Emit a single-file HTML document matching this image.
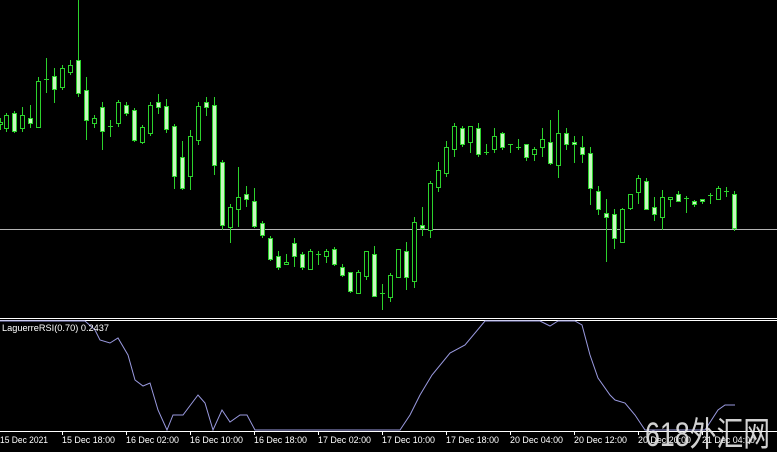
<!DOCTYPE html>
<html><head><meta charset="utf-8"><style>
html,body{margin:0;padding:0;background:#000;width:777px;height:452px;overflow:hidden}
svg{display:block}
.f{fill:#c8f8c0;stroke:#2cd22c}
.h{fill:#000;stroke:#2cd22c}
.w{stroke:#2cd22c}
text{font-family:"Liberation Sans",sans-serif;fill:#fff}
</style></head><body>
<svg width="777" height="452" viewBox="0 0 777 452" shape-rendering="crispEdges">
<rect width="777" height="452" fill="#000"/>
<line x1="0" y1="229.5" x2="777" y2="229.5" stroke="#b4b4b4"/>
<g id="c"></g>
<line x1="0" y1="318.5" x2="777" y2="318.5" stroke="#fff"/>
<line x1="0" y1="320.5" x2="777" y2="320.5" stroke="#fff"/>
<polyline shape-rendering="auto" fill="none" stroke="#9a9ae0" stroke-width="1" points="0,321 85,321 95,330 100,340 110,343 118,338 128,355 135,380 143,386 150,383 158,410 167,430 173,415 183,415 198,395 205,403 213,430 222,410 230,422 240,415 247,415 255,430 400,430 410,415 420,395 432,375 450,353 465,345 485,321 540,321 550,326 558,321 575,321 582,325 590,355 598,378 610,395 615,400 625,403 635,415 645,430 705,430 718,410 725,405 735,405"/>
<text x="2" y="331" font-size="9" textLength="107" lengthAdjust="spacingAndGlyphs">LaguerreRSI(0.70) 0.2437</text>
<line x1="0" y1="431.5" x2="777" y2="431.5" stroke="#fff"/>
<g stroke="#fff">
<line x1="62.5" y1="431" x2="62.5" y2="435"/><line x1="126.5" y1="431" x2="126.5" y2="435"/><line x1="190.5" y1="431" x2="190.5" y2="435"/><line x1="254.5" y1="431" x2="254.5" y2="435"/><line x1="318.5" y1="431" x2="318.5" y2="435"/><line x1="382.5" y1="431" x2="382.5" y2="435"/><line x1="446.5" y1="431" x2="446.5" y2="435"/><line x1="510.5" y1="431" x2="510.5" y2="435"/><line x1="574.5" y1="431" x2="574.5" y2="435"/><line x1="638.5" y1="431" x2="638.5" y2="435"/><line x1="702.5" y1="431" x2="702.5" y2="435"/>
</g>
<g font-size="9.5">
<text x="0" y="443" textLength="48" lengthAdjust="spacingAndGlyphs">15 Dec 2021</text>
<text x="62" y="443" textLength="53" lengthAdjust="spacingAndGlyphs">15 Dec 18:00</text>
<text x="126" y="443" textLength="53" lengthAdjust="spacingAndGlyphs">16 Dec 02:00</text>
<text x="190" y="443" textLength="53" lengthAdjust="spacingAndGlyphs">16 Dec 10:00</text>
<text x="254" y="443" textLength="53" lengthAdjust="spacingAndGlyphs">16 Dec 18:00</text>
<text x="318" y="443" textLength="53" lengthAdjust="spacingAndGlyphs">17 Dec 02:00</text>
<text x="382" y="443" textLength="53" lengthAdjust="spacingAndGlyphs">17 Dec 10:00</text>
<text x="446" y="443" textLength="53" lengthAdjust="spacingAndGlyphs">17 Dec 18:00</text>
<text x="510" y="443" textLength="53" lengthAdjust="spacingAndGlyphs">20 Dec 04:00</text>
<text x="574" y="443" textLength="53" lengthAdjust="spacingAndGlyphs">20 Dec 12:00</text>
<text x="638" y="443" textLength="53" lengthAdjust="spacingAndGlyphs">20 Dec 20:00</text>
<text x="702" y="443" textLength="53" lengthAdjust="spacingAndGlyphs">21 Dec 04:00</text>
</g>
<text x="645" y="446" font-size="34" textLength="125" lengthAdjust="spacingAndGlyphs" style="font-family:'Liberation Sans','Noto Sans CJK SC',sans-serif;fill:#e8e8e8;opacity:0.9" shape-rendering="auto">618外汇网</text>
</svg>
<script>
var d=[
[0,118,122,124,130,'h'],
[6,113,115,128,132,'h'],[14,111,113,131,133,'f'],[22,107,115,128,132,'h'],[30,105,118,123,128,'f'],
[38,77,81,127,127,'h'],[46,58,79,79,93,'c'],[54,68,76,89,103,'f'],[62,65,68,87,90,'h'],[70,60,65,72,75,'h'],
[78,0,60,93,97,'f'],[86,77,90,120,140,'f'],[94,115,118,123,128,'h'],[102,102,107,131,150,'f'],[110,120,126,126,137,'c'],
[118,100,102,123,127,'h'],[126,102,105,113,116,'f'],[134,108,110,140,142,'f'],[142,125,127,142,144,'h'],[150,102,105,133,136,'h'],
[158,94,102,107,114,'f'],[166,99,106,129,133,'f'],[174,124,126,176,189,'f'],[182,141,157,188,190,'f'],[190,130,136,176,190,'h'],
[198,102,106,140,145,'h'],[206,97,102,107,116,'f'],[214,97,105,165,175,'f'],
[222,160,162,225,230,'f'],[230,204,207,227,243,'h'],[238,167,197,209,227,'h'],[246,186,194,199,207,'f'],[254,188,201,226,228,'f'],
[262,221,223,235,238,'f'],[270,236,238,259,261,'f'],[278,251,256,267,270,'f'],[286,254,262,264,265,'h'],[294,238,243,256,267,'f'],
[302,252,254,267,270,'f'],[310,249,251,269,270,'h'],[318,251,254,254,265,'c'],[326,249,251,256,263,'h'],[334,247,249,264,266,'f'],
[342,264,267,275,277,'f'],[350,272,272,291,293,'f'],[358,270,272,293,294,'h'],[366,251,251,276,280,'h'],[374,246,254,296,297,'f'],
[382,284,293,293,310,'c'],[390,273,275,297,302,'h'],[398,249,249,277,278,'h'],[406,242,251,277,290,'f'],[414,217,222,281,288,'h'],
[422,207,225,228,236,'f'],[430,181,183,230,238,'h'],[438,162,170,187,192,'h'],[446,141,147,173,177,'h'],[454,123,126,149,157,'h'],
[462,126,128,144,147,'f'],[470,126,126,142,153,'h'],[478,123,128,154,157,'f'],[486,144,152,152,155,'c'],[494,128,136,149,153,'h'],
[502,132,133,147,150,'f'],[510,144,144,144,153,'c'],[518,139,147,147,150,'c'],[526,144,144,157,161,'f'],[534,147,149,154,161,'h'],
[542,128,139,147,157,'h'],[550,120,142,163,165,'f'],[558,110,133,165,178,'h'],[566,128,133,144,150,'f'],[574,136,142,144,163,'f'],
[582,136,147,154,163,'f'],[590,147,153,188,205,'f'],[598,186,191,209,215,'f'],[606,199,213,217,262,'f'],[614,209,214,238,249,'f'],
[622,208,209,242,243,'h'],[630,194,194,208,210,'h'],[638,175,178,192,204,'h'],[646,178,181,209,210,'f'],[654,197,207,214,221,'f'],
[662,190,197,217,230,'h'],[670,197,197,199,207,'h'],[678,191,194,201,202,'f'],[686,196,198,198,213,'c'],[694,200,201,204,207,'f'],
[702,199,199,201,204,'f'],[710,193,195,195,204,'c'],[718,186,188,199,200,'h'],[726,187,191,191,197,'c'],[734,191,194,228,231,'f']
];
var s='';
d.forEach(function(c){var x=c[0],X=x+0.5;
s+='<line class="w" x1="'+X+'" x2="'+X+'" y1="'+c[1]+'" y2="'+c[4]+'"/>';
if(c[5]=='c'){s+='<line class="w" x1="'+(x-2)+'" x2="'+(x+3)+'" y1="'+(c[2]+0.5)+'" y2="'+(c[2]+0.5)+'"/>';}
else{s+='<rect class="'+c[5]+'" x="'+(x-1.5)+'" y="'+(c[2]+0.5)+'" width="4" height="'+Math.max(1,c[3]-c[2])+'"/>';}
});
document.getElementById('c').innerHTML=s;
</script>
</body></html>
